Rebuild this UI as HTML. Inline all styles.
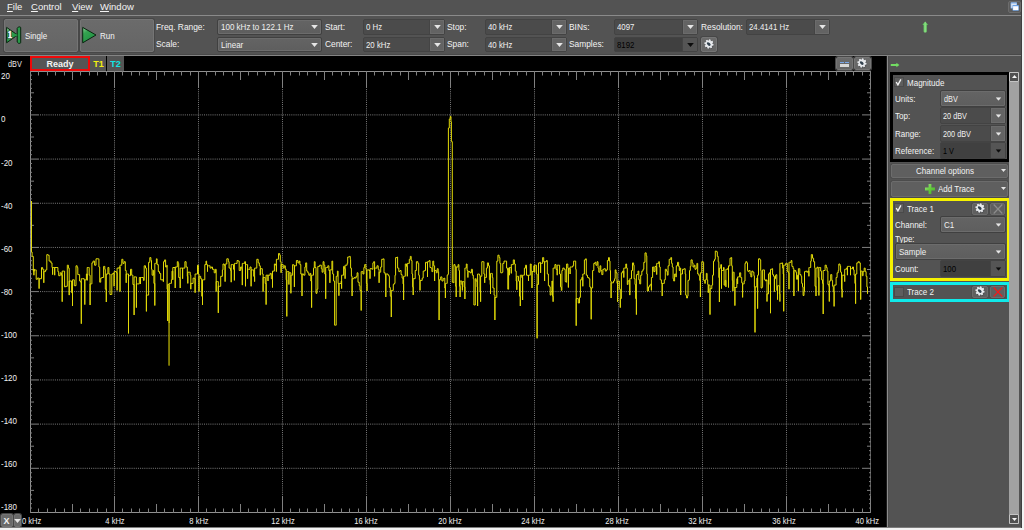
<!DOCTYPE html>
<html><head><meta charset="utf-8"><title>Spectrum</title>
<style>
*{box-sizing:border-box;margin:0;padding:0}
html,body{width:1024px;height:530px;overflow:hidden;background:#535353}
body{position:relative;font-family:"Liberation Sans","DejaVu Sans",sans-serif;font-size:9px;color:#f0f0f0;line-height:10px}
div,span{position:absolute;white-space:nowrap}
#menubar{left:0;top:0;width:1024px;height:15px;background:#535353}
#menuline{left:0;top:15px;width:1024px;height:1px;background:#8a8a8a}
.mi{top:1px;font-size:9.5px;line-height:12px;color:#f4f4f4}
.mi u{text-decoration:underline}
#toolbar{left:0;top:16px;width:1024px;height:38px;background:#535353}
#tbline{left:0;top:54px;width:1024px;height:2px;background:#848484;border-top:1px solid #494949}
.btn{border:1px solid #757575;border-radius:2px;background:linear-gradient(#6b6b6b,#656565);box-shadow:0 0 0 1px #474747}
.lb{font-size:9px;line-height:10px;color:#f4f4f4;transform:scaleX(.89);transform-origin:0 50%}
.btn.sb{border-color:#6c6c6c;background:#5f5f5f;box-shadow:0 0 0 1px #4c4c4c}
.lb.tl{transform:scaleX(.93)}
.lb.b{font-weight:bold;transform:none}
.fld{border:1px solid #434343;border-radius:2px;background:#4b4b4b}
.fld .ft{left:2px;top:0;height:100%;display:flex;align-items:center;position:absolute;transform:scaleX(.87);transform-origin:0 50%}
.fld .fb{right:0;top:0;height:100%;background:#636363;border-left:1px solid #444;box-shadow:inset 0 0 0 1px #6b6b6b}
.fld.dis{background:#404040}
.fld.dis .ft{color:#000}
.fld.dis .fb{background:#555;box-shadow:none}
.cmb{border:1px solid #404040;border-radius:2px;background:linear-gradient(#646464,#5e5e5e);box-shadow:inset 0 0 0 1px #6c6c6c}
.cmb .ft{left:3px;top:0;height:100%;display:flex;align-items:center;transform:scaleX(.89);transform-origin:0 50%}
.cmb .ca{right:2px;top:0;width:9px;height:100%}
.arr{position:absolute;left:50%;top:50%;margin-left:-3.5px;margin-top:-2px}
.gear{position:absolute;left:50%;top:50%;margin-left:-6.2px;margin-top:-6.6px}
#plot{left:0;top:56px;width:886px;height:471px;background:#000}
#plotsvg{position:absolute;left:0;top:0}
.yl{left:1px;font-size:9px;line-height:10px;color:#f0f0f0;transform:scaleX(.89);transform-origin:0 50%}
.xl{z-index:2;top:516px;font-size:9px;line-height:10px;color:#f0f0f0;transform:scaleX(.84);transform-origin:50% 50%}
#bottom{left:0;top:527px;width:1024px;height:3px;background:#f2f2f2;border-top:1px solid #7c7c7c}
.cb{width:10px;height:10px;background:#5e5e5e;border:1px solid #4a4a4a}
.rp .arr{transform:scale(.86)}
#rp{left:886px;top:56px;width:138px;height:471px;background:#535353}
</style></head><body>
<div id="menubar">
<div class="mi" style="left:7px"><u>F</u>ile</div>
<div class="mi" style="left:31px"><u>C</u>ontrol</div>
<div class="mi" style="left:72px"><u>V</u>iew</div>
<div class="mi" style="left:100px"><u>W</u>indow</div>
</div>
<div id="menuline"></div>
<div id="toolbar"></div>
<div id="tbline"></div>

<div class="btn" style="left:4px;top:19px;width:74px;height:33px"></div>
<div class="btn" style="left:80px;top:19px;width:74px;height:33px"></div>
<svg style="position:absolute;left:4px;top:24px" width="20" height="22" viewBox="0 0 20 22">
 <defs><linearGradient id="gg" x1="0" y1="0" x2="0.6" y2="1"><stop offset="0" stop-color="#8fd09a"/><stop offset="0.35" stop-color="#34a350"/><stop offset="1" stop-color="#1f8f42"/></linearGradient></defs>
 <path d="M2.6 3.4L13.6 11L2.6 18.8Z" fill="url(#gg)" stroke="#08240f" stroke-width="1" stroke-linejoin="round"/>
 <path d="M13.2 4.4L14.5 2.9h1.3q.9 0 .9 .9v14.6q0 .9-.9 .9h-1.3L13.2 18z" fill="#2a9a4a" stroke="#08240f" stroke-width="1" stroke-linejoin="round"/>
 <path d="M11.2 9.4L13.8 11L11.2 12.8z" fill="#2a9a4a"/>
 <text x="3.5" y="14.2" font-family="Liberation Serif,serif" font-weight="bold" font-size="9.5" fill="#0c3a1c" stroke="#0c3a1c" stroke-width="1.8" stroke-linejoin="round">1</text>
 <text x="3.5" y="14.2" font-family="Liberation Serif,serif" font-weight="bold" font-size="9.5" fill="#fff" stroke="#fff" stroke-width=".45">1</text>
</svg>
<div class="lb" style="left:25px;top:31px">Single</div>
<svg style="position:absolute;left:80px;top:24px" width="20" height="22" viewBox="0 0 20 22">
 <path d="M2.7 3.4L16 11L2.7 18.8Z" fill="url(#gg)" stroke="#08240f" stroke-width="1" stroke-linejoin="round"/>
</svg>
<div class="lb" style="left:100px;top:31px">Run</div>

<div class="lb tl" style="left:156px;top:22px">Freq. Range:</div>
<div class="lb tl" style="left:156px;top:39px">Scale:</div>
<div class="cmb " style="left:217px;top:19px;width:105px;height:16px"><span class="ft">100 kHz to 122.1 Hz</span><span class="ca"><svg class="arr" width="7" height="4" viewBox="0 0 7 4"><path d="M.2 0h6.6L3.5 3.9z" fill="#e6e6e6"/></svg></span></div>
<div class="cmb " style="left:217px;top:37px;width:105px;height:15px"><span class="ft">Linear</span><span class="ca"><svg class="arr" width="7" height="4" viewBox="0 0 7 4"><path d="M.2 0h6.6L3.5 3.9z" fill="#e6e6e6"/></svg></span></div>
<div class="lb tl" style="left:325px;top:22px">Start:</div>
<div class="lb tl" style="left:325px;top:39px">Center:</div>
<div class="fld " style="left:363px;top:19px;width:82px;height:16px"><span class="ft">0 Hz</span><span class="fb" style="width:15px"><svg class="arr" width="7" height="4" viewBox="0 0 7 4"><path d="M.2 0h6.6L3.5 3.9z" fill="#e6e6e6"/></svg></span></div>
<div class="fld " style="left:363px;top:37px;width:82px;height:15px"><span class="ft">20 kHz</span><span class="fb" style="width:15px"><svg class="arr" width="7" height="4" viewBox="0 0 7 4"><path d="M.2 0h6.6L3.5 3.9z" fill="#e6e6e6"/></svg></span></div>
<div class="lb tl" style="left:447px;top:22px">Stop:</div>
<div class="lb tl" style="left:447px;top:39px">Span:</div>
<div class="fld " style="left:485px;top:19px;width:82px;height:16px"><span class="ft">40 kHz</span><span class="fb" style="width:15px"><svg class="arr" width="7" height="4" viewBox="0 0 7 4"><path d="M.2 0h6.6L3.5 3.9z" fill="#e6e6e6"/></svg></span></div>
<div class="fld " style="left:485px;top:37px;width:82px;height:15px"><span class="ft">40 kHz</span><span class="fb" style="width:15px"><svg class="arr" width="7" height="4" viewBox="0 0 7 4"><path d="M.2 0h6.6L3.5 3.9z" fill="#e6e6e6"/></svg></span></div>
<div class="lb tl" style="left:569px;top:22px">BINs:</div>
<div class="lb tl" style="left:569px;top:39px">Samples:</div>
<div class="fld " style="left:614px;top:19px;width:84px;height:16px"><span class="ft">4097</span><span class="fb" style="width:15px"><svg class="arr" width="7" height="4" viewBox="0 0 7 4"><path d="M.2 0h6.6L3.5 3.9z" fill="#e6e6e6"/></svg></span></div>
<div class="fld dis " style="left:614px;top:37px;width:84px;height:15px"><span class="ft">8192</span><span class="fb" style="width:15px"><svg class="arr" width="7" height="4" viewBox="0 0 7 4"><path d="M.2 0h6.6L3.5 3.9z" fill="#0c0c0c"/></svg></span></div>
<div class="lb tl" style="left:701px;top:22px">Resolution:</div>
<div class="fld " style="left:746px;top:19px;width:84px;height:16px"><span class="ft">24.4141 Hz</span><span class="fb" style="width:15px"><svg class="arr" width="7" height="4" viewBox="0 0 7 4"><path d="M.2 0h6.6L3.5 3.9z" fill="#e6e6e6"/></svg></span></div>
<div class="btn" style="left:701px;top:37px;width:16px;height:15px"><svg class="gear" width="12" height="12" viewBox="-6.3 -6.3 12.6 12.6"><path d="M3.26 -1.28L4.83 -0.80L4.83 0.80L3.26 1.28L3.21 1.40L3.99 2.85L2.85 3.99L1.40 3.21L1.28 3.26L0.80 4.83L-0.80 4.83L-1.28 3.26L-1.40 3.21L-2.85 3.99L-3.99 2.85L-3.21 1.40L-3.26 1.28L-4.83 0.80L-4.83 -0.80L-3.26 -1.28L-3.21 -1.40L-3.99 -2.85L-2.85 -3.99L-1.40 -3.21L-1.28 -3.26L-0.80 -4.83L0.80 -4.83L1.28 -3.26L1.40 -3.21L2.85 -3.99L3.99 -2.85L3.21 -1.40Z" transform="translate(.5 .5) rotate(12)" fill="#2c3238" opacity=".55"/><path d="M3.26 -1.28L4.83 -0.80L4.83 0.80L3.26 1.28L3.21 1.40L3.99 2.85L2.85 3.99L1.40 3.21L1.28 3.26L0.80 4.83L-0.80 4.83L-1.28 3.26L-1.40 3.21L-2.85 3.99L-3.99 2.85L-3.21 1.40L-3.26 1.28L-4.83 0.80L-4.83 -0.80L-3.26 -1.28L-3.21 -1.40L-3.99 -2.85L-2.85 -3.99L-1.40 -3.21L-1.28 -3.26L-0.80 -4.83L0.80 -4.83L1.28 -3.26L1.40 -3.21L2.85 -3.99L3.99 -2.85L3.21 -1.40Z" transform="rotate(12)" fill="#e9ebee"/><ellipse cx="-.2" cy=".2" rx="2.3" ry="1.45" transform="rotate(42)" fill="#33424f"/></svg></div>
<svg style="position:absolute;left:921px;top:21px" width="9" height="12" viewBox="0 0 9 12"><defs><linearGradient id="ga" x1="0" y1="0" x2="1" y2="0"><stop offset="0" stop-color="#46b246"/><stop offset=".5" stop-color="#8be084"/><stop offset="1" stop-color="#46b246"/></linearGradient></defs><path d="M4.2 .5L7.2 3.9H5.8V10.6q0 .8-.8 .8H3.4q-.8 0-.8-.8V3.9H1.2Z" fill="url(#ga)"/></svg>
<div style="left:1008px;top:1px;width:13px;height:12px;border:1px solid #6c6c6c;background:#5c5c5c;border-radius:2px">
 <svg style="position:absolute;left:0;top:0" width="11" height="10" viewBox="0 0 11 10"><rect x="1.6" y=".3" width="6.4" height="6.2" rx=".6" fill="#8ab6ee"/><rect x="2.3" y="1.6" width="5" height="4.2" fill="#dfe6f0"/><rect x="3.5" y="2.9" width="6.4" height="5.8" rx=".6" fill="#6aa0e4"/><rect x="4.1" y="4.2" width="5.2" height="3.9" fill="#fbfbfd"/></svg>
</div>

<div id="plot"></div>
<svg id="plotsvg" width="886" height="530" viewBox="0 0 886 530">
<line x1="40" y1="114.9" x2="860" y2="114.9" stroke="#7c7c7c" stroke-width="1" stroke-dasharray="1 1.13"/>
<line x1="40" y1="159.08" x2="860" y2="159.08" stroke="#7c7c7c" stroke-width="1" stroke-dasharray="1 1.13"/>
<line x1="40" y1="203.25" x2="860" y2="203.25" stroke="#7c7c7c" stroke-width="1" stroke-dasharray="1 1.13"/>
<line x1="40" y1="247.43" x2="860" y2="247.43" stroke="#7c7c7c" stroke-width="1" stroke-dasharray="1 1.13"/>
<line x1="40" y1="291.6" x2="860" y2="291.6" stroke="#7c7c7c" stroke-width="1" stroke-dasharray="1 1.13"/>
<line x1="40" y1="335.78" x2="860" y2="335.78" stroke="#7c7c7c" stroke-width="1" stroke-dasharray="1 1.13"/>
<line x1="40" y1="379.95" x2="860" y2="379.95" stroke="#7c7c7c" stroke-width="1" stroke-dasharray="1 1.13"/>
<line x1="40" y1="424.12" x2="860" y2="424.12" stroke="#7c7c7c" stroke-width="1" stroke-dasharray="1 1.13"/>
<line x1="40" y1="468.3" x2="860" y2="468.3" stroke="#7c7c7c" stroke-width="1" stroke-dasharray="1 1.13"/>
<line x1="114.5" y1="87" x2="114.5" y2="496" stroke="#7c7c7c" stroke-width="1" stroke-dasharray="1 1.13"/>
<line x1="198.5" y1="87" x2="198.5" y2="496" stroke="#7c7c7c" stroke-width="1" stroke-dasharray="1 1.13"/>
<line x1="282.5" y1="87" x2="282.5" y2="496" stroke="#7c7c7c" stroke-width="1" stroke-dasharray="1 1.13"/>
<line x1="366.5" y1="87" x2="366.5" y2="496" stroke="#7c7c7c" stroke-width="1" stroke-dasharray="1 1.13"/>
<line x1="450.5" y1="87" x2="450.5" y2="496" stroke="#7c7c7c" stroke-width="1" stroke-dasharray="1 1.13"/>
<line x1="534.5" y1="87" x2="534.5" y2="496" stroke="#7c7c7c" stroke-width="1" stroke-dasharray="1 1.13"/>
<line x1="618.5" y1="87" x2="618.5" y2="496" stroke="#7c7c7c" stroke-width="1" stroke-dasharray="1 1.13"/>
<line x1="702.5" y1="87" x2="702.5" y2="496" stroke="#7c7c7c" stroke-width="1" stroke-dasharray="1 1.13"/>
<line x1="786.5" y1="87" x2="786.5" y2="496" stroke="#7c7c7c" stroke-width="1" stroke-dasharray="1 1.13"/>
<path d="M870.5 71.5V512.5" fill="none" stroke="#5c5c5c" stroke-width="1"/>
<path d="M871 71.5H30.5V512.5H871" fill="none" stroke="#909090" stroke-width="1"/>
<path d="M30.5 71v17M30.5 513v-17M38.5 71v4.5M38.5 513v-4.5M47.5 71v4.5M47.5 513v-4.5M55.5 71v4.5M55.5 513v-4.5M64.5 71v4.5M64.5 513v-4.5M72.5 71v9M72.5 513v-9M80.5 71v4.5M80.5 513v-4.5M89.5 71v4.5M89.5 513v-4.5M97.5 71v4.5M97.5 513v-4.5M106.5 71v4.5M106.5 513v-4.5M114.5 71v17M114.5 513v-17M122.5 71v4.5M122.5 513v-4.5M131.5 71v4.5M131.5 513v-4.5M139.5 71v4.5M139.5 513v-4.5M148.5 71v4.5M148.5 513v-4.5M156.5 71v9M156.5 513v-9M164.5 71v4.5M164.5 513v-4.5M173.5 71v4.5M173.5 513v-4.5M181.5 71v4.5M181.5 513v-4.5M190.5 71v4.5M190.5 513v-4.5M198.5 71v17M198.5 513v-17M206.5 71v4.5M206.5 513v-4.5M215.5 71v4.5M215.5 513v-4.5M223.5 71v4.5M223.5 513v-4.5M232.5 71v4.5M232.5 513v-4.5M240.5 71v9M240.5 513v-9M248.5 71v4.5M248.5 513v-4.5M257.5 71v4.5M257.5 513v-4.5M265.5 71v4.5M265.5 513v-4.5M274.5 71v4.5M274.5 513v-4.5M282.5 71v17M282.5 513v-17M290.5 71v4.5M290.5 513v-4.5M299.5 71v4.5M299.5 513v-4.5M307.5 71v4.5M307.5 513v-4.5M316.5 71v4.5M316.5 513v-4.5M324.5 71v9M324.5 513v-9M332.5 71v4.5M332.5 513v-4.5M341.5 71v4.5M341.5 513v-4.5M349.5 71v4.5M349.5 513v-4.5M358.5 71v4.5M358.5 513v-4.5M366.5 71v17M366.5 513v-17M374.5 71v4.5M374.5 513v-4.5M383.5 71v4.5M383.5 513v-4.5M391.5 71v4.5M391.5 513v-4.5M400.5 71v4.5M400.5 513v-4.5M408.5 71v9M408.5 513v-9M416.5 71v4.5M416.5 513v-4.5M425.5 71v4.5M425.5 513v-4.5M433.5 71v4.5M433.5 513v-4.5M442.5 71v4.5M442.5 513v-4.5M450.5 71v17M450.5 513v-17M458.5 71v4.5M458.5 513v-4.5M467.5 71v4.5M467.5 513v-4.5M475.5 71v4.5M475.5 513v-4.5M484.5 71v4.5M484.5 513v-4.5M492.5 71v9M492.5 513v-9M500.5 71v4.5M500.5 513v-4.5M509.5 71v4.5M509.5 513v-4.5M517.5 71v4.5M517.5 513v-4.5M526.5 71v4.5M526.5 513v-4.5M534.5 71v17M534.5 513v-17M542.5 71v4.5M542.5 513v-4.5M551.5 71v4.5M551.5 513v-4.5M559.5 71v4.5M559.5 513v-4.5M568.5 71v4.5M568.5 513v-4.5M576.5 71v9M576.5 513v-9M584.5 71v4.5M584.5 513v-4.5M593.5 71v4.5M593.5 513v-4.5M601.5 71v4.5M601.5 513v-4.5M610.5 71v4.5M610.5 513v-4.5M618.5 71v17M618.5 513v-17M626.5 71v4.5M626.5 513v-4.5M635.5 71v4.5M635.5 513v-4.5M643.5 71v4.5M643.5 513v-4.5M652.5 71v4.5M652.5 513v-4.5M660.5 71v9M660.5 513v-9M668.5 71v4.5M668.5 513v-4.5M677.5 71v4.5M677.5 513v-4.5M685.5 71v4.5M685.5 513v-4.5M694.5 71v4.5M694.5 513v-4.5M702.5 71v17M702.5 513v-17M710.5 71v4.5M710.5 513v-4.5M719.5 71v4.5M719.5 513v-4.5M727.5 71v4.5M727.5 513v-4.5M736.5 71v4.5M736.5 513v-4.5M744.5 71v9M744.5 513v-9M752.5 71v4.5M752.5 513v-4.5M761.5 71v4.5M761.5 513v-4.5M769.5 71v4.5M769.5 513v-4.5M778.5 71v4.5M778.5 513v-4.5M786.5 71v17M786.5 513v-17M794.5 71v4.5M794.5 513v-4.5M803.5 71v4.5M803.5 513v-4.5M811.5 71v4.5M811.5 513v-4.5M820.5 71v4.5M820.5 513v-4.5M828.5 71v9M828.5 513v-9M836.5 71v4.5M836.5 513v-4.5M845.5 71v4.5M845.5 513v-4.5M853.5 71v4.5M853.5 513v-4.5M862.5 71v4.5M862.5 513v-4.5M870.5 71v17M870.5 513v-17M30 75.14h2M871 75.14h-2M30 79.56h2M871 79.56h-2M30 83.98h2M871 83.98h-2M30 88.4h2M871 88.4h-2M30 92.81h4M871 92.81h-4M30 97.23h2M871 97.23h-2M30 101.65h2M871 101.65h-2M30 106.06h2M871 106.06h-2M30 110.48h2M871 110.48h-2M30 114.9h9M871 114.9h-9M30 119.32h2M871 119.32h-2M30 123.74h2M871 123.74h-2M30 128.15h2M871 128.15h-2M30 132.57h2M871 132.57h-2M30 136.99h4M871 136.99h-4M30 141.41h2M871 141.41h-2M30 145.82h2M871 145.82h-2M30 150.24h2M871 150.24h-2M30 154.66h2M871 154.66h-2M30 159.08h9M871 159.08h-9M30 163.49h2M871 163.49h-2M30 167.91h2M871 167.91h-2M30 172.33h2M871 172.33h-2M30 176.75h2M871 176.75h-2M30 181.16h4M871 181.16h-4M30 185.58h2M871 185.58h-2M30 190.0h2M871 190.0h-2M30 194.42h2M871 194.42h-2M30 198.83h2M871 198.83h-2M30 203.25h9M871 203.25h-9M30 207.67h2M871 207.67h-2M30 212.09h2M871 212.09h-2M30 216.5h2M871 216.5h-2M30 220.92h2M871 220.92h-2M30 225.34h4M871 225.34h-4M30 229.76h2M871 229.76h-2M30 234.17h2M871 234.17h-2M30 238.59h2M871 238.59h-2M30 243.01h2M871 243.01h-2M30 247.43h9M871 247.43h-9M30 251.84h2M871 251.84h-2M30 256.26h2M871 256.26h-2M30 260.68h2M871 260.68h-2M30 265.1h2M871 265.1h-2M30 269.51h4M871 269.51h-4M30 273.93h2M871 273.93h-2M30 278.35h2M871 278.35h-2M30 282.76h2M871 282.76h-2M30 287.18h2M871 287.18h-2M30 291.6h9M871 291.6h-9M30 296.02h2M871 296.02h-2M30 300.44h2M871 300.44h-2M30 304.85h2M871 304.85h-2M30 309.27h2M871 309.27h-2M30 313.69h4M871 313.69h-4M30 318.11h2M871 318.11h-2M30 322.52h2M871 322.52h-2M30 326.94h2M871 326.94h-2M30 331.36h2M871 331.36h-2M30 335.78h9M871 335.78h-9M30 340.19h2M871 340.19h-2M30 344.61h2M871 344.61h-2M30 349.03h2M871 349.03h-2M30 353.45h2M871 353.45h-2M30 357.86h4M871 357.86h-4M30 362.28h2M871 362.28h-2M30 366.7h2M871 366.7h-2M30 371.12h2M871 371.12h-2M30 375.53h2M871 375.53h-2M30 379.95h9M871 379.95h-9M30 384.37h2M871 384.37h-2M30 388.79h2M871 388.79h-2M30 393.2h2M871 393.2h-2M30 397.62h2M871 397.62h-2M30 402.04h4M871 402.04h-4M30 406.46h2M871 406.46h-2M30 410.87h2M871 410.87h-2M30 415.29h2M871 415.29h-2M30 419.71h2M871 419.71h-2M30 424.12h9M871 424.12h-9M30 428.54h2M871 428.54h-2M30 432.96h2M871 432.96h-2M30 437.38h2M871 437.38h-2M30 441.8h2M871 441.8h-2M30 446.21h4M871 446.21h-4M30 450.63h2M871 450.63h-2M30 455.05h2M871 455.05h-2M30 459.47h2M871 459.47h-2M30 463.88h2M871 463.88h-2M30 468.3h9M871 468.3h-9M30 472.72h2M871 472.72h-2M30 477.13h2M871 477.13h-2M30 481.55h2M871 481.55h-2M30 485.97h2M871 485.97h-2M30 490.39h4M871 490.39h-4M30 494.81h2M871 494.81h-2M30 499.22h2M871 499.22h-2M30 503.64h2M871 503.64h-2M30 508.06h2M871 508.06h-2" fill="none" stroke="#808080" stroke-width="1"/>
<path d="M31.5 204H31.5V201H31.5V252H32.1V256.4H33.3V271.1H34.4V269.3H33.9V275.2V269.9H35.6H36.2V279.3H37.4V278.1H39.1V288.6V278.7H39.7H41.5V267.5H42.6V269.3H43.8V282.8V271.6H44.4H45.6V269.9H46.8V254.6H47.9V255.2H49.1V261.1H50.9V262.9H52.0V267.5H52.6V274.6V267.5H53.8H54.7V275.2V267.5H56.1H57.9V271.6H58.7V275.7H60.2V272.8H61.4V275.2H62.2V301.7V271.1H63.2H64.6V286.9H65.5V286.3H67.3V265.2H68.4V268.1H69.2V295.1V281.0H70.4H71.6V292.7H72.5V306V279.8H73.1H74.3V285.7H76.0V265.8H77.2V267.5H77.8V274.6H79.6V281.0H80.7V282.2H81.3V323.7V278.7H82.5H84.2V279.8H84.8V304.6V279.8H85.4H86.4V274.0H87.2V280.4V267.5H88.4H89.2V275.2H90.1V305V283.9H91.3H91.9V262.9H93.0V261.1H94.6V265.2H96.0V258.8H98.3V258.8H98.9V267.0H99.7V282.2H100.7V278.1H101.8V277.5H103.6V266.4H104.8V269.3H105.3V289.2H106.3V302V274.0H106.8H107.9V267.5H108.9V274.0H110.0V294.5H111.2V294.5H111.8V274.0H113.0V273.4H114.1V286.3V271.6H115.0H116.5V272.8H117.1V290.4V268.1H118.0H119.2V267.0H120.0V291.6V265.2H120.6H121.8V259.3H122.9V263.4H124.1V261.7H125.3V270.5H126.2V282.8V274.0H127.4H128.5V333.4V275.7H129.4H130.5V269.3H131.7V275.2H132.9V284.5H134.1V315V276.9H135.2H136.4V307.6V283.9H137.6H139.3V277.5H140.5V283.9V277.5H141.7H143.4V280.4H144.2V265.8H145.5V268.1H146.4V311.4V295.1H147.5H148.0V295.1H148.6V262.3H149.8V257.6H150.9V260.5H151.5V269.3H152.1V275.2H153.3V270.5H153.9V283.4H154.8V305.5V263.4H155.6H156.4V258.8H157.1V264.6H158.3V271.6H159.5V273.4H160.7V279.8H163.2V281.6H163.5V261.7H164.6V259.9H165.6V267.0H166.8V265.2H167.1V289.2H167.7V321V284.5H168.5H169.1V365.6V283.4H170.3H171.4V279.8H172.0V271.1H172.8V279.8V267.5H174.0H175.2V288.0V267.0H175.9H177.3V261.7H178.2V263.4H178.7V277.5H179.9V279.8H180.2V288.0V268.1H181.4H182.6V278.7V268.1H183.4H184.9V261.7H186.1V267.0H187.3V276.3H187.8V283.4V272.2H189.2H190.2V275.2H190.8V289.2V283.4H191.9H193.1V278.1H194.3V278.7H195.1V292.7V274.0H196.3H197.5V265.2H198.4V274.0H199.0V291.6V276.3H199.6H200.7V278.7H201.7V296.2H202.5V305V279.8H203.7H204.8V264.6H206.0V261.1H206.6V264.6H207.5V271.6V265.8H208.4H210.1V268.1H211.3V267.0H212.5V269.3H214.2V272.8H215.4V269.3H216.2V291.6V281.6H217.4H218.3V312.9V286.3H219.5H220.7V276.3H222.4V269.9H223.0V264.0H224.2V265.2H225.1V281.6V264.0H225.6H226.8V258.8H228.3V261.7H229.1V268.1H230.6V270.5H231.2V282.2V264.6H232.4H233.5V269.3H234.4V280.4V263.4H235.3H237.1V260.5H238.2V261.1H239.2V270.5H240.6V267.0H241.8V269.3H242.3V285.1V263.4H243.5H244.7V261.7H245.5V286.3V264.6H246.4H247.6V278.7V269.3H248.5H250.0V267.0H251.1V286.3V269.9H252.5H253.7V276.3H254.6V281.6V268.1H255.8H256.8V259.3H258.2V262.9H259.3V265.8H260.3V275.2V268.7H261.1H262.3V274.0H263.1V291.6V277.5H264.2H265.2V283.4H266.1V304.6V275.2H267.3H268.0V281.0V275.2H268.9H270.1V273.4H271.3V278.7H272.5V287.5V271.1H272.9H274.4V264.0H275.6V265.2H276.4V271.6V259.3H277.4H278.5V253.5H279.7V255.2H280.3V261.7H281.1V272.8V264.6H282.1H283.2V268.1H284.2V265.8H285.3V269.3H286.2V279.8H286.8V316.4V271.6H287.7H288.9V284.5V272.8H289.7H290.9V293.3V275.2H291.7H292.6V264.6H293.5V265.2H294.4V286.9V265.8H295.5H296.4V260.5H297.9V262.9H299.1V261.1H299.9V264.6H300.8V274.0H302.0V296V274.0H302.9H303.7V275.2H304.9V267.0H305.7V262.9H306.7V271.1H307.8V272.8H308.8V275.2H310.0V273.4H310.8V281.0H311.6V307.6V275.2H312.5H313.5V268.1H314.3V261.7H315.1V267.5H316.0V293.3H317.0V289.2H317.8V266.4H319.6V265.2H321.3V268.7H322.1V272.2H323.1V261.7H324.0V265.2H324.8V274.0H325.7V298.8V267.5H326.4H327.8V265.8H328.9V270.5H329.9V282.8V269.9H330.7H331.9V261.1H332.7V274.0H333.6V281.0H334.6V325.2H335.4V325.2H336.2V276.3H337.4V271.1H338.1V283.4H338.9V295.7V283.4H339.7H341.2V281.0H341.6V288.6V275.2H342.4H343.6V266.4H344.4V268.7H345.1V278.7V265.2H345.9H347.1V263.4H347.7V257.0H349.4V256.4H350.3V259.3H350.6V268.1H351.4V276.3H352.1V296V278.7H353.0H354.1V277.5H355.3V278.1H356.1V276.3H357.1V272.8H358.0V282.2H359.2V285.7H360.0V290.4H361.2V310.5V271.6H361.8H362.9V274.0H363.9V267.5H364.7V264.6H365.9V269.3H366.4V283.4H367.0V291.0V269.9H367.6H369.0V270.5H370.0V278.7V268.7H371.1H372.3V269.3H372.9V262.9H373.7V261.7H374.6V276.3V268.1H375.6H377.0V265.8H378.2V269.3H379.1V282.8V272.2H379.9H380.7V267.0H381.7V259.3H383.4V258.8H384.0V272.8H385.2V274.6H385.8V297V274.0H386.9H388.0V275.2H388.9V276.3H389.4V287.5H390.3V296.2H391.3V317V290.4H392.1H393.3V284.5H394.1V283.4H395.0V275.2H395.6V257.6H397.1V257.0H397.6V268.1H398.8V271.6H400.0V270.5H401.1V274.6H402.1V278.1H403.0V283.9H403.6V300V276.3H404.4H405.3V264.0H406.5V266.4H407.3V276.3V263.4H408.2H409.3V259.3H410.3V256.4H411.2V260.5H412.0V274.0H412.6V286.9H413.2V295V278.7H414.0H415.2V270.5H416.4V261.7H417.9V263.4H418.7V275.2H419.4V279.8H420.0V290.4V280.4H420.8H422.2V278.1H423.2V271.1H424.6V270.5H425.5V262.3H426.7V262.9H427.5V276.9V261.7H428.1H429.2V260.5H430.0V267.5H431.1V268.1H431.9V271.6H432.8V261.1H433.7V265.8H434.6V281.0V270.5H435.1H436.3V272.8H437.2V268.7H438.2V271.6H438.6V279.8H439.1V320V279.8H439.8H440.7V276.9H441.9V281.0H443.1V278.7H444.2V278.1H444.8V288.0H445.4V298V283.4H446.4H447.2V275.2H448.0V274.0H448.4V272H448.4V128H449.3V128H449.3V119H450.2V116.5H451V122H451.4V141.6H452.3V141.6H452.3V282H452.2V282.2H453.6V282.8H453.9V264.6H455.0V266.4H455.7V286.3H456.2V297V267.0H456.9H458.1V264.6H458.9V270.5H459.5V286.3H460.1V297V281.0H460.9H461.8V284.5H462.4V290.4V281.6H463.2H464.2V286.9H464.9V299V268.1H465.3H466.3V264.0H467.1V270.5H467.9V277.5V271.6H468.9H470.0V272.8H471.4V269.3H472.4V275.2H473.3V278.7H473.9V305H474.7V305H475.3V278.7H476.1V281.0H477.1V286.9H477.6V306V274.0H478.5H479.4V275.2H480.0V291.6H480.6V301.7V276.3H481.2H481.8V261.7H483.5V261.7H483.9V274.0H484.7V282.8V277.5H485.5H486.4V268.1H487.4V262.9H488.5V265.8H489.4V279.8H490.2V284.5H490.5V293.9V273.4H491.4H492.3V277.5H492.9V288.0H494.1V295.1H494.9V320V297.4H496.4H496.8V261.1H497.9V255.2H499.1V257.6H499.9V263.4H500.7V272.8H502.3V272.2H502.8V263.4H504.0V261.1H505.8V261.1H506.6V268.1H507.5V270.5H507.8V289.2H508.0V289.2H508.6V268.1H509.4V275.2V267.5H510.3H511.3V273.4V264.6H512.1H513.3V259.9H514.4V264.0H515.3V271.1H516.2V281.0H516.8V289.8V276.3H517.6H518.5V281.0H519.5V296.2H520.3V306V275.2H520.9H521.8V277.5H522.6V300V275.2H523.5H524.4V268.1H525.6V265.2H526.5V275.2H527.7V275.7H528.5V281.0V275.2H529.3H530.3V264.0H531.2V271.1H532.0V288.0V271.6H532.8H533.8V265.8H534.7V272.2V265.2H535.5H536.4V274.0H537.1V338.3V284.5H537.9H538.5V262.9H539.9V262.3H540.6V272.8V263.4H541.4H542.6V257.6H543.7V261.7H544.6V281.0V261.7H545.5H546.4V260.5H547.3V274.0H548.4V285.7H549.6V286.9H550.2V295.1H551.1V291.6H551.9V281.0H552.5V296.2H553.1V301.7V268.1H553.7H554.9V264.6H556.0V269.3H557.2V275.2V265.2H558.4H559.6V274.0H560.5V286.9H561.3V290.4H561.9V270.5H562.8V268.1H564.2V269.3H565.2V281.6H566.0V282.2H566.6V264.0H567.8V268.1H568.4V287.5V268.7H569.2H570.1V274.0V267.0H571.3H572.7V265.8H573.6V261.1H574.8V261.1H575.7V269.3H576.2V325.7V298.6H577.1H578.3V303H579.5V297.4H580.4V279.8H581.8V277.5H582.8V286.3V274.0H583.6H584.4V259.9H585.6V258.8H586.3V275.2H587.5V277.5H588.9V278.7H589.8V286.9H590.6V288.0H591.2V319.3V288.0H592.1H592.6V270.5H593.8V263.4H595.0V262.3H595.9V265.2H597.1V261.7H598.0V268.1H598.8V272.2H600.0V265.8H600.8V270.5H601.8V274.6H602.9V269.3H604.1V268.7H605.3V271.1H606.4V269.9H607.4V260.5H608.5V257.6H609.4V261.1H610.0V270.5H610.5V281.0H611.1V298V282.8H612.1H613.5V281.0H614.6V278.7H615.2V269.9H616.0V272.8H617.0V283.4H617.6V301.7V281.0H618.4H619.3V289.2H620.3V307.6V298.6H621.1H621.4V272.8H622.6V271.1H623.8V277.5V268.1H624.6H625.8V264.0H626.6V268.1H627.3V284.5H628.0V281.0H628.9V280.4H629.8V295.1V278.7H630.6H631.5V270.5H632.5V262.9H633.6V265.2H634.1V278.7H635.0V284.5H635.6V298.6H636.4V314.6V274.6H636.8H638.0V271.1H638.8V279.8H639.7V283.9H640.7V275.2H641.8V271.1H643.0V269.3H643.8V262.3H645.0V252.9H646.2V255.8H646.8V274.0H647.3V291.0H648.5V286.9H649.7V285.1H650.9V283.9H651.4V290.4V277.5H652.0H652.6V267.0H653.8V271.6H655.0V266.4H656.1V267.0H656.7V274.6V263.4H657.5H658.7V261.7H659.4V267.0H660.2V279.8H661.4V283.4H662.2V296V283.4H663.2H664.3V279.8H665.3V269.3H666.4V271.1H667.3V275.2H668.1V265.8H669.2V259.3H670.8V257.6H671.6V263.4H672.3V267.0H673.1V278.7H673.7V281.0H674.6V274.0H675.8V276.9H676.3V265.8H677.5V262.3H678.6V266.4H679.3V270.5H680.1V268.1H680.7V295V274.0H681.7H682.5V269.3H684.2V268.7H685.2V274.0H685.7V295.1H686.6V298H687.5V296.2H688.0V280.4H688.9V279.8H689.5V270.5H690.3V266.4H691.0V259.9H692.2V262.9H693.0V267.0H694.2V265.2H695.0V269.3H696.0V268.1H696.9V263.4H697.7V274.0H698.9V275.7H699.7V280.4H700.4V297V272.8H701.2H701.8V261.7H703.2V262.3H703.6V280.4H704.8V283.4H705.3V279.8H706.3V273.4H707.1V279.8H707.7V284.5H708.3V292.7V285.1H709.1H710.0V314.6V288.6H710.6H711.8V285.1H712.6V275.2H713.5V261.1H714.5V259.3H715.3V251.1H716.5V251.7H717.3V256.4H718.2V261.7H718.8V277.5H719.4V302V268.1H720.0H720.8V264.6H721.5V288.6V270.5H722.3H723.5V267.5H724.1V285.1H725.0V280.4H725.9V286.9V269.3H726.7H727.8V268.1H728.5V287.5V265.8H729.0H730.0V258.2H731.1V257.6H731.7V265.8H732.3V280.4H732.9V291.0V272.2H733.5H734.1V287.5H734.9V305.6V287.5H735.8H736.8V278.7H737.6V283.9V276.9H738.4H739.6V272.8H740.7V277.5H741.7V282.8H742.6V297.4V283.9H743.4H744.2V281.0H745.0V263.4H745.8V261.7H746.9V262.9H747.5V270.5H748.0V271.6H748.9V270.5H750.1V274.0H750.9V276.9H751.8V271.1H752.9V272.2H753.9V275.7H754.4V286.9H755.0V332.4V286.9H756.0H756.8V278.1H757.6V308.6V275.2H758.0H758.5V258.8H760.0V259.9H760.7V270.5H761.1V288.0H762.1V286.9H762.6V269.9H763.8V269.9H764.4V279.8H765.6V281.0H766.5V279.8H767.0V301.5V293.9H767.9H768.5V274.0H769.3V272.8H770.0V284.5H770.5V313.2V269.3H771.2H772.0V268.7H772.6V274.6H773.5V276.3H774.4V291.6V278.7H775.0H775.5V275.2H776.4V274.6H776.8V290.4H777.5V299.6V285.7H778.5H779.4V293.9H779.9V301.5V263.4H780.6H781.8V262.9H782.6V268.1H783.2V274.0H783.7V311.3V265.2H784.6H785.7V263.4H786.7V263.4H787.3V271.6H788.4V272.8H789.0V289.2V262.3H789.6H791.1V260.5H791.9V266.4H793.1V268.7H793.9V296V270.5H794.6H795.8V272.2H796.6V279.3H797.5V275.2H798.4V291.0V268.7H799.1H799.8V274.6H801.0V276.3H801.7V283.4H802.5V286.9H803.1V295.5H804.0V291.6H804.5V271.6H805.7V271.1H806.8V272.2H807.8V271.1H808.9V276.3V267.5H809.5H810.7V261.1H811.3V254.6H812.5V258.2H813.6V261.7H814.6V267.5H815.0V286.3H816.0V296V268.1H816.6H817.4V267.0H818.1V277.5H818.9V295.5V267.5H819.7H820.7V271.1H821.6V279.8H822.5V283.4H823.2V314V270.5H823.9H825.1V265.2H826.3V267.5H827.1V271.1H827.9V284.5H828.9V286.3H829.3V301.5V281.0H830.0H830.7V274.6H831.8V280.4H832.6V286.3H833.3V291.6H834.1V306.4V285.1H835.0H836.1V277.5H837.1V272.8H838.2V270.5H838.8V264.0H840.0V265.8H840.6V272.2H841.5V289.2H842.1V297.4V275.2H842.7H843.9V275.2H844.7V281.6V269.3H845.3H846.4V268.1H847.4V275.2V266.4H848.2H849.7V266.4H850.5V275.2V268.7H851.4H852.5V267.0H853.5V269.9H854.1V275.2H854.9V283.4H855.6V303.7V274.0H856.0H856.8V262.9H858.2V261.7H859.3V262.9H860.3V270.5H860.7V299.6V271.1H861.4H862.3V275.7H863.1V271.6H864.2V268.1H865.2V271.6H866.1V276.3H866.9V286.9H867.5V293.9" fill="none" stroke="#e2da08" stroke-width="1" stroke-linejoin="miter"/>
<line x1="169.8" y1="323" x2="169.8" y2="367" stroke="#000" stroke-opacity=".32" stroke-width="3"/>
</svg>
<div class="yl" style="top:71px">20</div><div class="yl" style="top:114px">0</div><div class="yl" style="top:158px">-20</div><div class="yl" style="top:201px">-40</div><div class="yl" style="top:244px">-60</div><div class="yl" style="top:287px">-80</div><div class="yl" style="top:330px">-100</div><div class="yl" style="top:373px">-120</div><div class="yl" style="top:416px">-140</div><div class="yl" style="top:459px">-160</div><div class="yl" style="top:502px">-180</div>
<div class="xl" style="left:22px;text-align:left;transform-origin:0 50%">0 kHz</div><div class="xl" style="left:95.3px;width:40px;text-align:center">4 kHz</div><div class="xl" style="left:178.9px;width:40px;text-align:center">8 kHz</div><div class="xl" style="left:262.5px;width:40px;text-align:center">12 kHz</div><div class="xl" style="left:346.1px;width:40px;text-align:center">16 kHz</div><div class="xl" style="left:429.6px;width:40px;text-align:center">20 kHz</div><div class="xl" style="left:513.2px;width:40px;text-align:center">24 kHz</div><div class="xl" style="left:596.8px;width:40px;text-align:center">28 kHz</div><div class="xl" style="left:680.4px;width:40px;text-align:center">32 kHz</div><div class="xl" style="left:763.9px;width:40px;text-align:center">36 kHz</div><div class="xl" style="left:839px;width:40px;text-align:right;transform-origin:100% 50%">40 kHz</div>
<div class="lb" style="left:8px;top:59px;color:#e8e8e8;transform:scaleX(.81)">dBV</div>
<div style="left:30px;top:56px;width:60px;height:15px;background:#555;border:2px solid #f00808"></div>
<div class="lb b" style="left:30px;top:59px;width:60px;text-align:center">Ready</div>
<div style="left:90px;top:56px;width:16px;height:15px;background:#555"></div>
<div style="left:107px;top:56px;width:17px;height:15px;background:#555"></div>
<div class="lb b" style="left:90px;top:59px;width:17px;text-align:center;color:#f4f010">T1</div>
<div class="lb b" style="left:107px;top:59px;width:17px;text-align:center;color:#10e6e6">T2</div>

<div class="btn" style="left:836px;top:57px;width:17px;height:13px"><svg style="position:absolute;left:3px;top:3px" width="9" height="7" viewBox="0 0 9 7"><rect x="0" y="1" width="4" height="1" fill="#7aa7e8"/><rect x="5" y="1" width="4" height="1" fill="#7aa7e8"/><rect x="0" y="3" width="9" height="3" fill="#d8d8d8"/></svg></div>
<div class="btn" style="left:854px;top:57px;width:17px;height:13px"><svg class="gear" width="12" height="12" viewBox="-6.3 -6.3 12.6 12.6"><path d="M3.26 -1.28L4.83 -0.80L4.83 0.80L3.26 1.28L3.21 1.40L3.99 2.85L2.85 3.99L1.40 3.21L1.28 3.26L0.80 4.83L-0.80 4.83L-1.28 3.26L-1.40 3.21L-2.85 3.99L-3.99 2.85L-3.21 1.40L-3.26 1.28L-4.83 0.80L-4.83 -0.80L-3.26 -1.28L-3.21 -1.40L-3.99 -2.85L-2.85 -3.99L-1.40 -3.21L-1.28 -3.26L-0.80 -4.83L0.80 -4.83L1.28 -3.26L1.40 -3.21L2.85 -3.99L3.99 -2.85L3.21 -1.40Z" transform="translate(.5 .5) rotate(12)" fill="#2c3238" opacity=".55"/><path d="M3.26 -1.28L4.83 -0.80L4.83 0.80L3.26 1.28L3.21 1.40L3.99 2.85L2.85 3.99L1.40 3.21L1.28 3.26L0.80 4.83L-0.80 4.83L-1.28 3.26L-1.40 3.21L-2.85 3.99L-3.99 2.85L-3.21 1.40L-3.26 1.28L-4.83 0.80L-4.83 -0.80L-3.26 -1.28L-3.21 -1.40L-3.99 -2.85L-2.85 -3.99L-1.40 -3.21L-1.28 -3.26L-0.80 -4.83L0.80 -4.83L1.28 -3.26L1.40 -3.21L2.85 -3.99L3.99 -2.85L3.21 -1.40Z" transform="rotate(12)" fill="#e9ebee"/><ellipse cx="-.2" cy=".2" rx="2.3" ry="1.45" transform="rotate(42)" fill="#33424f"/></svg></div>

<div class="btn" style="left:1px;top:514px;width:12px;height:13px;background:#6a6a6a"></div>
<div class="lb b" style="left:3.5px;top:516px">X</div>
<div class="btn" style="left:14px;top:514px;width:7px;height:13px;background:#6a6a6a"><svg class="arr" width="7" height="4" viewBox="0 0 7 4"><path d="M.2 0h6.6L3.5 3.9z" fill="#e6e6e6"/></svg></div>

<div id="rp"></div>
<div id="bottom"></div>

<div style="left:886px;top:56px;width:1px;height:471px;background:#1c1c1c"></div><div style="left:887px;top:56px;width:1px;height:471px;background:#8c8c8c"></div><div style="left:888px;top:56px;width:1px;height:471px;background:#4c4c4c"></div>

<svg style="position:absolute;left:890px;top:62px" width="11" height="6" viewBox="0 0 11 6"><path d="M1.2 1.9h5.2V.8L9.4 3L6.4 5.2V4.1H1.2q-.5 0-.5-.5V2.4q0-.5 .5-.5z" fill="#72dc62"/></svg>

<div style="left:890px;top:72px;width:119px;height:90px;background:#000"></div>
<div style="left:893px;top:75px;width:114px;height:84px;background:#535353"></div>
<div class="cb" style="left:894px;top:77px"><svg style="position:absolute;left:0px;top:0px" width="8" height="9" viewBox="0 0 8 9"><path d="M1.2 4L2.9 6.9L5.9 1.4" fill="none" stroke="#f4f4f4" stroke-width="1.35"/></svg></div>
<div class="lb " style="left:907px;top:78px">Magnitude</div>
<div class="lb " style="left:895px;top:94px">Units:</div>
<div class="cmb rp" style="left:940px;top:90px;width:66px;height:17px"><span class="ft" style="transform:scaleX(0.81)">dBV</span><span class="ca"><svg class="arr" width="7" height="4" viewBox="0 0 7 4"><path d="M.2 0h6.6L3.5 3.9z" fill="#e6e6e6"/></svg></span></div>
<div class="lb " style="left:895px;top:111px">Top:</div>
<div class="fld rp" style="left:940px;top:107px;width:66px;height:17px"><span class="ft" style="transform:scaleX(0.81)">20 dBV</span><span class="fb" style="width:15px"><svg class="arr" width="7" height="4" viewBox="0 0 7 4"><path d="M.2 0h6.6L3.5 3.9z" fill="#e6e6e6"/></svg></span></div>
<div class="lb " style="left:895px;top:129px">Range:</div>
<div class="fld rp" style="left:940px;top:125px;width:66px;height:17px"><span class="ft" style="transform:scaleX(0.81)">200 dBV</span><span class="fb" style="width:15px"><svg class="arr" width="7" height="4" viewBox="0 0 7 4"><path d="M.2 0h6.6L3.5 3.9z" fill="#e6e6e6"/></svg></span></div>
<div class="lb " style="left:895px;top:146px">Reference:</div>
<div class="fld dis rp" style="left:940px;top:142px;width:66px;height:17px"><span class="ft" style="transform:scaleX(0.81)">1 V</span><span class="fb" style="width:15px"><svg class="arr" width="7" height="4" viewBox="0 0 7 4"><path d="M.2 0h6.6L3.5 3.9z" fill="#0c0c0c"/></svg></span></div>

<div class="btn sb" style="left:891px;top:164px;width:117px;height:14px"></div>
<div class="lb" style="left:891px;top:166px;width:108px;text-align:center;transform-origin:50% 50%">Channel options</div>
<div style="left:999px;top:164px;width:9px;height:13px"><svg class="arr" style="margin-left:-2.5px;margin-top:-1.5px" width="5" height="3" viewBox="0 0 5 3"><path d="M0 0h5L2.5 2.9z" fill="#e6e6e6"/></svg></div>
<div class="btn sb" style="left:891px;top:181px;width:117px;height:16px"></div>
<div style="left:925px;top:183.5px;width:10px;height:10px"><svg style="position:absolute;left:0;top:0" width="10" height="10" viewBox="0 0 10 10"><defs><linearGradient id="gp" x1="0" y1="0" x2="1" y2="1"><stop offset="0" stop-color="#a4e884"/><stop offset=".5" stop-color="#62cc3c"/><stop offset="1" stop-color="#48ac2c"/></linearGradient></defs><path d="M3.6 0h2.8v3.6H10v2.8H6.4V10H3.6V6.4H0V3.6h3.6z" fill="url(#gp)"/></svg></div>
<div class="lb" style="left:938px;top:184px">Add Trace</div>
<div style="left:999px;top:181px;width:9px;height:15px"><svg class="arr" style="margin-left:-2.5px;margin-top:-1.5px" width="5" height="3" viewBox="0 0 5 3"><path d="M0 0h5L2.5 2.9z" fill="#e6e6e6"/></svg></div>

<div style="left:890px;top:198px;width:119px;height:83px;background:#f6f200"></div>
<div style="left:893px;top:201px;width:114px;height:77px;background:#535353"></div>
<div class="cb" style="left:894px;top:203px"><svg style="position:absolute;left:0px;top:0px" width="8" height="9" viewBox="0 0 8 9"><path d="M1.2 4L2.9 6.9L5.9 1.4" fill="none" stroke="#f4f4f4" stroke-width="1.35"/></svg></div>
<div class="lb " style="left:907px;top:204px">Trace 1</div>
<div class="btn sb" style="left:972px;top:203px;width:16px;height:12px"><svg class="gear" width="12" height="12" viewBox="-6.3 -6.3 12.6 12.6"><path d="M3.26 -1.28L4.83 -0.80L4.83 0.80L3.26 1.28L3.21 1.40L3.99 2.85L2.85 3.99L1.40 3.21L1.28 3.26L0.80 4.83L-0.80 4.83L-1.28 3.26L-1.40 3.21L-2.85 3.99L-3.99 2.85L-3.21 1.40L-3.26 1.28L-4.83 0.80L-4.83 -0.80L-3.26 -1.28L-3.21 -1.40L-3.99 -2.85L-2.85 -3.99L-1.40 -3.21L-1.28 -3.26L-0.80 -4.83L0.80 -4.83L1.28 -3.26L1.40 -3.21L2.85 -3.99L3.99 -2.85L3.21 -1.40Z" transform="translate(.5 .5) rotate(12)" fill="#2c3238" opacity=".55"/><path d="M3.26 -1.28L4.83 -0.80L4.83 0.80L3.26 1.28L3.21 1.40L3.99 2.85L2.85 3.99L1.40 3.21L1.28 3.26L0.80 4.83L-0.80 4.83L-1.28 3.26L-1.40 3.21L-2.85 3.99L-3.99 2.85L-3.21 1.40L-3.26 1.28L-4.83 0.80L-4.83 -0.80L-3.26 -1.28L-3.21 -1.40L-3.99 -2.85L-2.85 -3.99L-1.40 -3.21L-1.28 -3.26L-0.80 -4.83L0.80 -4.83L1.28 -3.26L1.40 -3.21L2.85 -3.99L3.99 -2.85L3.21 -1.40Z" transform="rotate(12)" fill="#e9ebee"/><ellipse cx="-.2" cy=".2" rx="2.3" ry="1.45" transform="rotate(42)" fill="#33424f"/></svg></div>
<div class="btn sb" style="left:990px;top:203px;width:15px;height:12px"><svg style="position:absolute;left:1.5px;top:0.0px" width="10" height="10" viewBox="0 0 10 10"><path d="M.7 .5L9.3 9.5M9.3 .5L.7 9.5" stroke="#8c8c8c" stroke-width="1.2" fill="none"/></svg></div>
<div class="lb " style="left:895px;top:220px">Channel:</div>
<div class="cmb rp" style="left:940px;top:216px;width:66px;height:17px"><span class="ft">C1</span><span class="ca"><svg class="arr" width="7" height="4" viewBox="0 0 7 4"><path d="M.2 0h6.6L3.5 3.9z" fill="#e6e6e6"/></svg></span></div>
<div class="lb " style="left:895px;top:234px">Type:</div>
<div class="cmb rp" style="left:895px;top:243px;width:111px;height:17px"><span class="ft">Sample</span><span class="ca"><svg class="arr" width="7" height="4" viewBox="0 0 7 4"><path d="M.2 0h6.6L3.5 3.9z" fill="#e6e6e6"/></svg></span></div>
<div class="lb " style="left:895px;top:264px">Count:</div>
<div class="fld dis rp" style="left:940px;top:260px;width:66px;height:17px"><span class="ft">100</span><span class="fb" style="width:15px"><svg class="arr" width="7" height="4" viewBox="0 0 7 4"><path d="M.2 0h6.6L3.5 3.9z" fill="#0c0c0c"/></svg></span></div>

<div style="left:890px;top:282px;width:119px;height:20px;background:#10eaea"></div>
<div style="left:893px;top:285px;width:114px;height:14px;background:#535353"></div>
<div class="cb" style="left:894px;top:287px"></div>
<div class="lb " style="left:907px;top:287px">Trace 2</div>
<div class="btn sb" style="left:972px;top:286px;width:16px;height:12px"><svg class="gear" width="12" height="12" viewBox="-6.3 -6.3 12.6 12.6"><path d="M3.26 -1.28L4.83 -0.80L4.83 0.80L3.26 1.28L3.21 1.40L3.99 2.85L2.85 3.99L1.40 3.21L1.28 3.26L0.80 4.83L-0.80 4.83L-1.28 3.26L-1.40 3.21L-2.85 3.99L-3.99 2.85L-3.21 1.40L-3.26 1.28L-4.83 0.80L-4.83 -0.80L-3.26 -1.28L-3.21 -1.40L-3.99 -2.85L-2.85 -3.99L-1.40 -3.21L-1.28 -3.26L-0.80 -4.83L0.80 -4.83L1.28 -3.26L1.40 -3.21L2.85 -3.99L3.99 -2.85L3.21 -1.40Z" transform="translate(.5 .5) rotate(12)" fill="#2c3238" opacity=".55"/><path d="M3.26 -1.28L4.83 -0.80L4.83 0.80L3.26 1.28L3.21 1.40L3.99 2.85L2.85 3.99L1.40 3.21L1.28 3.26L0.80 4.83L-0.80 4.83L-1.28 3.26L-1.40 3.21L-2.85 3.99L-3.99 2.85L-3.21 1.40L-3.26 1.28L-4.83 0.80L-4.83 -0.80L-3.26 -1.28L-3.21 -1.40L-3.99 -2.85L-2.85 -3.99L-1.40 -3.21L-1.28 -3.26L-0.80 -4.83L0.80 -4.83L1.28 -3.26L1.40 -3.21L2.85 -3.99L3.99 -2.85L3.21 -1.40Z" transform="rotate(12)" fill="#e9ebee"/><ellipse cx="-.2" cy=".2" rx="2.3" ry="1.45" transform="rotate(42)" fill="#33424f"/></svg></div>
<div class="btn sb" style="left:990px;top:286px;width:15px;height:12px"><svg style="position:absolute;left:1.5px;top:0.0px" width="10" height="10" viewBox="0 0 10 10"><path d="M.7 .5L9.3 9.5M9.3 .5L.7 9.5" stroke="#ee1c1c" stroke-width="1.2" fill="none"/></svg></div>

<div style="left:1009px;top:72px;width:10px;height:452px;background:#a2a2a2"></div>
<div style="left:1009px;top:72px;width:10px;height:10px;background:#505050;border:1px solid #c4c4c4;border-radius:1px"><svg style="position:absolute;left:1.5px;top:2px" width="5" height="3" viewBox="0 0 5 3"><path d="M0 3L2.5 0L5 3z" fill="#f4f4f4"/></svg></div>
<div style="left:1009px;top:514px;width:10px;height:10px;background:#505050;border:1px solid #c4c4c4;border-radius:1px"><svg style="position:absolute;left:1.5px;top:2.5px" width="5" height="3" viewBox="0 0 5 3"><path d="M0 0L2.5 3L5 0z" fill="#f4f4f4"/></svg></div>
<div style="left:1021px;top:0;width:1px;height:528px;background:#3e3e3e"></div>
<div style="left:1022px;top:0;width:2px;height:530px;background:#f2f2f2"></div>

</body></html>
